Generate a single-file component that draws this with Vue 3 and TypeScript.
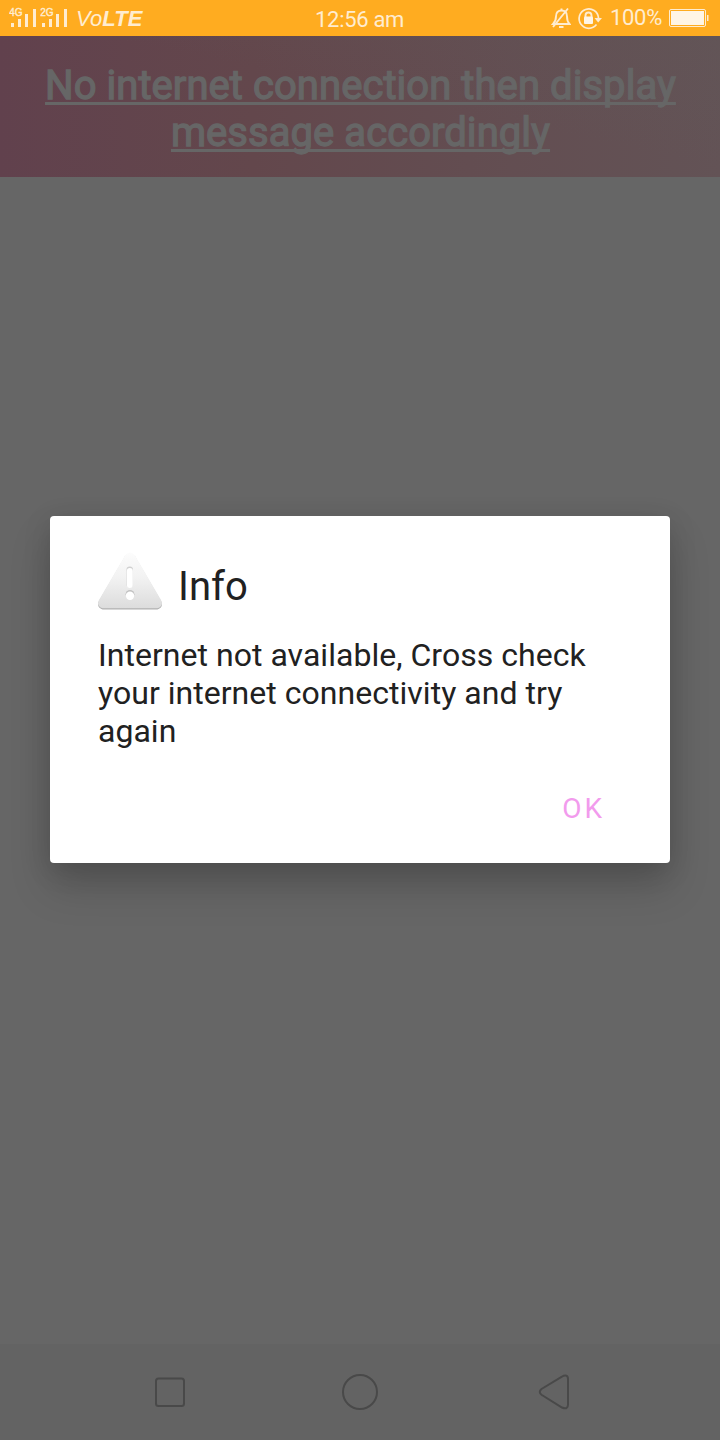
<script setup lang="ts">
interface Bar { x: number; h: number }
const networks: { label: string; bars: Bar[] }[] = [
  { label: '4G', bars: [{ x: 2, h: 4 }, { x: 9, h: 8 }, { x: 16, h: 13 }, { x: 24, h: 18 }] },
  { label: '2G', bars: [{ x: 2, h: 4 }, { x: 9, h: 8 }, { x: 16, h: 13 }, { x: 24, h: 18 }] },
]
const titleLines = ['No internet connection then display', 'message accordingly']
const messageLines = [
  'Internet not available, Cross check',
  'your internet connectivity and try',
  'again',
]
</script>

<template>
  <div class="screen">
    <header class="status">
      <div class="left">
        <svg v-for="n in networks" :key="n.label" class="signal" width="31" height="36" viewBox="0 0 31 36">
          <text x=".3" y="16" class="net">{{ n.label }}</text>
          <rect v-for="b in n.bars" :key="b.x" :x="b.x" :y="27 - b.h" width="3" :height="b.h" fill="#ffecd0" />
        </svg>
        <span class="volte">Vo<b>LTE</b></span>
      </div>
      <time class="clock">12:56 am</time>
      <div class="right">
        <svg width="20" height="36" viewBox="0 0 20 36" fill="none" stroke="#ffecd0" stroke-width="1.9">
          <path d="M2 24c2-2 3-4 3-7.500 0-4 2-6 5.500-6s5.500 2 5.500 6c0 3.500 .5 5.500 2.500 7.500z" />
          <path d="M17 8.500 2 27M10.500 8.500v2M8 27h4.500" />
        </svg>
        <svg class="rotation" width="26" height="36" viewBox="0 0 26 36">
          <path d="M19.500 24.500A9.700 9.700 0 1 1 21.500 18" fill="none" stroke="#ffecd0" stroke-width="1.700" />
          <path d="M17.500 18h7.500L21.200 22.500z" fill="#ffecd0" />
          <path d="M8.500 17v-1.500a3 3 0 0 1 6 0V17" fill="none" stroke="#ffecd0" stroke-width="1.900" />
          <rect x="7" y="16.500" width="9" height="7.500" rx="1" fill="#fff5e5" />
        </svg>
        <span class="percent">100%</span>
        <svg width="40" height="36" viewBox="0 0 40 36">
          <rect x=".5" y="9.500" width="36" height="17" rx="1.500" fill="none" stroke="#ffecd0" />
          <rect x="2" y="11" width="33" height="14" fill="#fff5e6" />
          <rect x="38" y="15" width="1.500" height="6" fill="#ffecd0" />
        </svg>
      </div>
    </header>

    <h1 class="title">
      <span v-for="line in titleLines" :key="line">{{ line }}</span>
    </h1>

    <main class="body">
      <section class="dialog" role="alertdialog">
        <div class="heading">
          <svg width="64" height="64" viewBox="0 0 64 64">
            <defs>
              <linearGradient id="face" x1="0" y1="0" x2="0" y2="1">
                <stop offset="0" stop-color="#fcfcfc" />
                <stop offset=".45" stop-color="#f2f2f2" />
                <stop offset="1" stop-color="#dcdcdc" />
              </linearGradient>
            </defs>
            <path d="M27 4.500Q32-1.500 37 4.500L63 49Q66 55 59.500 57.500H4.500Q-2 55 1 49z" fill="#b0b0b0" />
            <path d="M27 3.500Q32-2.500 37 3.500L63 48Q66 54 59.500 56.300H4.500Q-2 54 1 48z" fill="url(#face)" />
            <rect x="28.500" y="14.500" width="6.500" height="21" rx="3.200" fill="#d0d0d0" />
            <rect x="28.800" y="16" width="6" height="20" rx="3" fill="#fff" />
            <circle cx="32" cy="42.300" r="4.400" fill="#c0c0c0" />
            <circle cx="32" cy="43.700" r="4.200" fill="#fff" />
          </svg>
          <h2>Info</h2>
        </div>
        <p class="message"><span v-for="line in messageLines" :key="line">{{ line }}</span></p>
        <div class="actions"><button type="button">OK</button></div>
      </section>
    </main>

    <nav class="nav">
      <svg width="720" height="96" viewBox="0 0 720 96" fill="none" stroke="#494949" stroke-width="2">
        <rect x="156" y="34.500" width="28" height="27.500" rx="2.500" />
        <circle cx="360" cy="48" r="17" />
        <path d="M541.500 45 561.500 32.800Q568 29.500 568 35V60.500Q568 66 562 63.500L541.500 50.800Q538 48 541.500 45z" />
      </svg>
    </nav>
  </div>
</template>

<style>
body { margin: 0; }
</style>

<style scoped>
.screen { width: 720px; height: 1440px; display: flex; flex-direction: column; overflow: hidden; background: #666; font-family: Roboto, sans-serif; }
.status { height: 36px; flex: none; display: grid; grid-template-columns: 315px 90px 1fr; background: #ffac20; color: #ffecd0; }
.left { display: flex; padding-left: 9px; }
.signal { display: block; }
.net { font: 10px "Liberation Sans", sans-serif; fill: #ffecd0; stroke: #ffecd0; stroke-width: .4px; }
.volte { margin-left: 5px; font: italic 22px/38px "Liberation Sans", sans-serif; letter-spacing: .1px; white-space: nowrap; }
.clock { font-size: 22px; line-height: 39px; letter-spacing: -.3px; white-space: nowrap; }
.right { display: flex; justify-content: flex-end; padding-right: 11px; }
.right svg { flex: none; }
.rotation { margin-left: 6px; }
.percent { font-size: 22px; line-height: 36px; letter-spacing: -.3px; margin: 0 7px 0 7px; }
.title { flex: none; height: 141px; box-sizing: border-box; margin: 0; padding: 26px 0 0 1px; display: flex; flex-direction: column; align-items: center; background: linear-gradient(12deg, transparent 55%, rgba(94, 91, 91, .2)), linear-gradient(90deg, #61414d 0%, #63474c 35%, #634d51 65%, #635356 100%); color: #666; font-size: 40px; font-weight: 400; line-height: 47px; letter-spacing: .06px; -webkit-text-stroke: 1.300px #666; }
.title span { text-decoration: underline 3px; text-decoration-skip-ink: none; text-underline-offset: 3px; white-space: nowrap; }
.body { flex: 1; padding: 339px 50px 0; }
.dialog { height: 347px; box-sizing: border-box; padding: 36px 48px 0; background: #fff; border-radius: 4px; color: #212121; box-shadow: 0 24px 40px rgba(0, 0, 0, .17), 0 6px 28px rgba(0, 0, 0, .13); }
.heading { display: flex; align-items: center; gap: 16px; height: 64px; }
h2 { margin: 5px 0 0; font-size: 40px; line-height: 47px; font-weight: 400; }
.message { margin: 20px 0 0; font-size: 32px; line-height: 38px; letter-spacing: .03px; }
.message span { display: block; white-space: nowrap; }
.actions { display: flex; justify-content: flex-end; margin-top: 35px; padding-right: 17px; }
button { border: 0; padding: 0; background: none; color: #f29bed; font: 400 28px/48px Roboto, sans-serif; letter-spacing: 3px; }
.nav { flex: none; height: 96px; background: #636363; }
.nav svg { display: block; }
</style>
